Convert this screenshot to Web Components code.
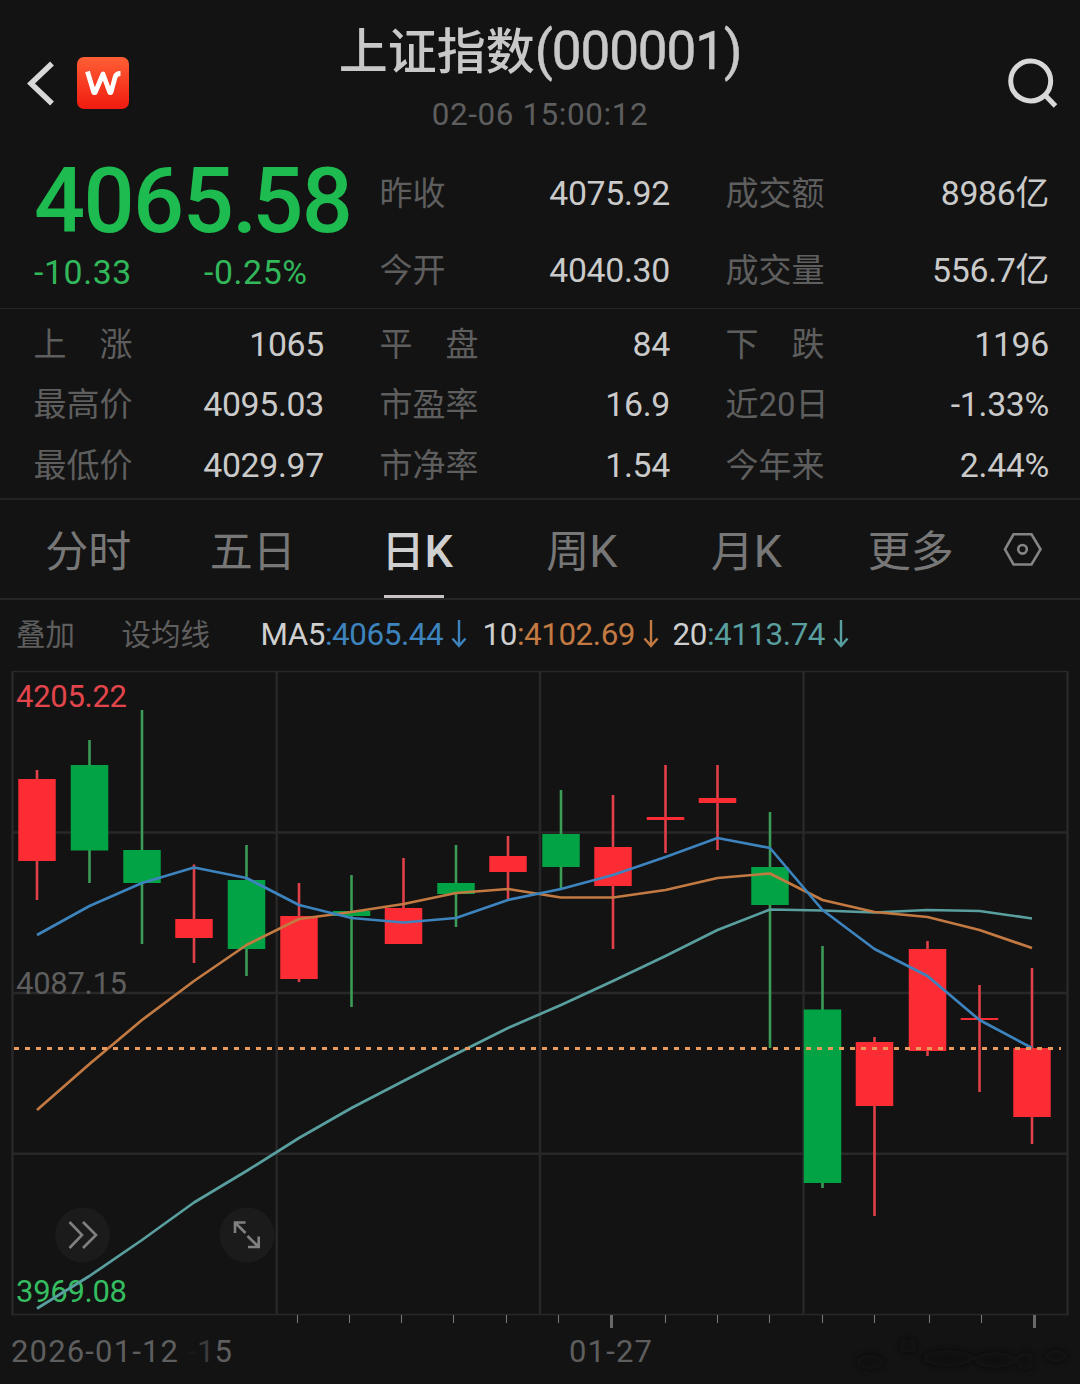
<!DOCTYPE html>
<html lang="zh-CN">
<head>
  <meta charset="utf-8">
  <title>上证指数</title>
  <style>
    html, body { margin: 0; background: #131313; }
    body { width: 1080px; height: 1384px; overflow: hidden; color: #cacaca;
      font-family: "Noto Sans CJK SC", sans-serif; font-size: 33px; }
  </style>
</head>
<body>
  <index-page></index-page>

  <script>
    // small helper: every element below gets its shadow root from a string
    // .num is for latin text and digits, it does not change the line box around it
    const numStyle = '.num { font-family: Roboto, "Noto Sans CJK SC", sans-serif; line-height: 0; }';
    const define = (name, render) => {
      customElements.define(name, class extends HTMLElement {
        connectedCallback() {
          if (this.shadowRoot) return;
          this.attachShadow({mode: 'open'}).innerHTML = `<style>${numStyle}</style>` + render(this);
        }
      });
    };

    define('nav-header', () => `<style>
    :host { display: flex; height: 150px; justify-content: space-between; align-items: flex-start; }
    .side { width: 200px; padding-top: 45px; height: 75px; }
    svg { display: block; }
    .right svg { margin-left: auto; }
    .middle { text-align: center; white-space: nowrap; }
    .title { font-size: 49px; line-height: 60px; height: 60px; padding-top: 18px; font-weight: 500; color: #c8c8c8; }
    .title .num { font-size: 53px; letter-spacing: -1.100px; font-weight: 400; -webkit-text-stroke: .5px; }
    .time { font-size: 30.500px; line-height: 40px; margin-top: 14px; color: #5e5e5e; }
    .time .num { font-size: 31.400px; letter-spacing: .6px; }
    </style>
    <div class="side">
      <svg width="140" height="75" viewBox="0 45 140 75" fill="none">
        <defs><linearGradient id="g" x1="0" y1="0" x2="0" y2="1"><stop offset="0" stop-color="#ff5f35"/><stop offset="1" stop-color="#f01a10"/></linearGradient></defs>
        <path d="M52 63.500 31 83.500 52 103.500" stroke="#d8d8d8" stroke-width="5.500"/>
        <rect x="77" y="57" width="52" height="52" rx="7" fill="url(#g)"/>
        <path d="M87.500 71.500 93.800 92.500H95.200L103 74 109.800 92.500H111L115 77.500Q116 73.500 120.500 73.500" stroke="#fff" stroke-width="4.800" stroke-linejoin="round"/>
      </svg>
    </div>
    <div class="middle">
      <div class="title"><slot name="title"></slot><span class="num"><slot name="code"></slot></span></div>
      <div class="time"><span class="num"><slot name="time"></slot></span></div>
    </div>
    <div class="side right">
      <svg width="80" height="75" viewBox="1000 45 80 75" fill="none" stroke="#d8d8d8" stroke-width="5">
        <circle cx="1030.700" cy="81" r="20"/><path d="M1044.500 94.500 1055.500 106"/>
      </svg>
    </div>`);

    define('quote-item', el => `<style>
    :host { display: flex; justify-content: space-between; line-height: 48px; height: 48px; white-space: pre; }
    .label { color: #5e5e5e; margin-left: -.5px; }
    .value .num { font-size: 33.800px; letter-spacing: -.3px; }
    </style>
    <span class="label">${el.getAttribute('label').replace(/\d+/g, '<span class="num">$&</span>')}</span><span class="value"><span class="num"><slot></slot></span></span>`);

    define('price-panel', () => `<style>
    :host { display: grid; grid-template-columns: 290px 290px 323px; column-gap: 56px;
      padding-left: 34px; height: 158px; border-bottom: 1px solid #262626; }
    .price { font-family: Roboto, sans-serif; font-size: 90px; line-height: 104px; height: 104px; font-weight: 500;
      color: #1dbb50; letter-spacing: -1.600px; white-space: nowrap; }
    .change { display: flex; line-height: 48px; color: #32b85a; margin-top: -6px; }
    .change ::slotted(span) { flex: none; width: 170px; font-family: Roboto, sans-serif; font-size: 33.800px; line-height: 50px; letter-spacing: .6px; }
    .col { padding-top: 17px; display: flex; flex-direction: column; gap: 29px; }
    </style>
    <div><div class="price"><slot name="price"></slot></div><div class="change"><slot name="change"></slot></div></div>
    <div class="col"><slot name="open"></slot></div>
    <div class="col"><slot name="volume"></slot></div>`);

    define('stat-grid', () => `<style>
    :host { display: grid; grid-template-columns: 290px 290px 323px; grid-auto-rows: 48px; gap: 12.300px 56px;
      padding: 9px 0 0 34px; height: 180px; border-bottom: 2px solid #232323; }
    </style><slot></slot>`);

    define('tab-item', el => `<style>
    :host { width: 164.500px; text-align: center; font-size: 43px; line-height: 97px; height: 98px; color: #777; position: relative; }
    :host([active]) { color: #d0d0d0; font-weight: 500; }
    :host([active])::after { content: ""; position: absolute; left: 49px; bottom: 0; width: 60px; height: 3px; background: #c8c4c4; }
    .num { font-size: 45px; }
    </style><slot></slot><span class="num"><slot name="k"></slot></span>`);

    define('tab-bar', () => `<style>
    :host { display: flex; height: 98px; padding-left: 6px; border-bottom: 2px solid #262626; }
    svg { margin: 29px 0 0 7px; }
    </style><slot></slot>
    <svg width="44" height="40" viewBox="1000 529 44 40" fill="none" stroke="#858585" stroke-width="2.600">
      <path d="M1005 549.300 1013.500 534.300H1031.500L1040.500 549.300 1031.500 564.500H1013.500Z"/><circle cx="1022.500" cy="549.300" r="4.300"/>
    </svg>`);

    define('ma-value', el => `<style>
    :host { display: flex; color: ${el.getAttribute('color')}; font-family: Roboto, sans-serif; font-size: 31.400px; letter-spacing: -.450px; }
    b { font-weight: 400; color: #cfcfcf; }
    svg { margin: 19px 0 0 8px; }
    </style>
    <b>${el.getAttribute('label')}</b>:<slot></slot>
    <svg width="16" height="30" viewBox="0 0 16 30" fill="none" stroke="currentColor" stroke-width="2.400"><path d="M8 1V27M1.500 19.500 8 27 14.500 19.500"/></svg>`);

    define('ma-bar', () => `<style>
    :host { display: flex; height: 68px; line-height: 65px; padding-left: 16px; white-space: nowrap; }
    .tool { font-size: 29.500px; color: #5e5e5e; width: 105.500px; }
    .tool.lines { width: 139px; }
    .values { display: grid; grid-template-columns: 222px 190px auto; line-height: 69px; }
    </style>
    <span class="tool">叠加</span><span class="tool lines">设均线</span><div class="values"><slot></slot></div>`);

    // center x, high, low, body top, body bottom, direction
    const candles = [
      [37, 770, 900, 779, 861, 'r'], [89.5, 740, 883, 765, 850.5, 'g'], [142, 710, 944, 850, 883, 'g'],
      [194, 864.5, 963, 919, 938, 'r'], [246.5, 845, 976, 880, 949, 'g'], [299, 883, 982, 916, 979, 'r'],
      [351.5, 875, 1007, 911, 916, 'g'], [403.5, 858, 944, 908, 944, 'r'], [456, 845, 927, 883, 894, 'g'],
      [508, 836, 900, 856, 872, 'r'], [561, 790, 889, 834, 867, 'g'], [613, 795, 949, 847, 886, 'r'],
      [665.5, 765, 853, 817, 820, 'r'], [717.5, 765, 850, 798, 803, 'r'], [770, 812, 1048, 867, 905, 'g'],
      [822.5, 946, 1188, 1009.5, 1183, 'g'], [874.5, 1037, 1216, 1042, 1106, 'r'], [927.5, 941, 1056, 949, 1051, 'r'],
      [979.5, 985, 1092, 1018, 1020, 'r'], [1032, 968, 1144, 1048, 1117, 'r']
    ];
    const ma5 = [935, 906, 883, 867.5, 878, 905, 918, 922.5, 918, 900, 889, 875, 857, 838, 848, 910, 949, 976, 1020, 1048];
    const ma10 = [1110, 1064, 1020, 981, 945, 919, 912, 904, 893, 889, 897.5, 897.5, 890, 878, 873.5, 900, 912, 917, 930, 948];
    const ma20 = [1308.5, 1276, 1240, 1202.5, 1171, 1138, 1108, 1081, 1054, 1028, 1005, 981, 956, 930, 909.5, 910.5, 912.5, 910, 911, 918.5];
    const colors = {r: ['#fb2c34', '#e04048'], g: ['#02a344', '#3a9c56']};
    const line = (ys, color) => `<polyline points="${ys.map((y, i) => `${candles[i][0]},${y}`).join(' ')}" stroke="${color}" stroke-width="2.700" fill="none" stroke-linejoin="round"/>`;

    define('k-chart', () => {
      const bars = candles.map(([x, hi, lo, top, bottom, dir]) => `
        <path d="M${x} ${hi}V${lo}" stroke="${colors[dir][1]}" stroke-width="2.600"/>
        <rect x="${x - 18.75}" y="${top}" width="37.500" height="${bottom - top}" fill="${colors[dir][0]}"/>`).join('');
      const ticks = [297.5, 349.5, 401.5, 453.5, 506.5, 558.5, 665.5, 717.5, 769.5, 822.5, 874.5, 929.5, 981.5];
      return `<style>
    :host { display: block; height: 716px; }
    svg { display: block; }
    text { font-family: Roboto, sans-serif; font-size: 31px; }
    </style>
    <svg width="1080" height="716" viewBox="0 668 1080 716">
      <defs><filter id="soft" filterUnits="userSpaceOnUse" x="820" y="1316" width="260" height="68"><feGaussianBlur stdDeviation="3"/></filter></defs>
      <g stroke="#282828" stroke-width="2.500" fill="none">
        <path d="M276.700 672V1314M540 672V1314M803.500 672V1314M13 832.500H1067M13 993H1067M13 1153.700H1067"/>
        <path d="M12.500 671V1315M1067.500 671V1315"/><path d="M12 671.500H1068M12 1314.500H1068" stroke-width="1.300"/>
      </g>
      ${bars}
      <text x="16" y="707" textLength="111" fill="#e2454b">4205.22</text>
      <text x="16" y="994" textLength="111" fill="#5e5e5e">4087.15</text>
      <text x="16" y="1302" textLength="111" fill="#35bd60">3969.08</text>
      ${line(ma20, '#5a9f9f')}${line(ma10, '#c37a42')}${line(ma5, '#3d83bd')}
      <path d="M14 1048.500H1061" stroke="#e99a5c" stroke-width="3" stroke-dasharray="5 6"/>
      <circle cx="82.500" cy="1235" r="27.500" fill="#1b1b1b"/><circle cx="247" cy="1235" r="27.500" fill="#1b1b1b"/>
      <g fill="none" stroke="#808080" stroke-width="2.600">
        <path d="M69.500 1222 82 1235 69.500 1248M83 1222 96 1235 83 1248"/>
        <path d="M245.500 1222.500H235V1233M236 1223.500 245.500 1233M248 1247H258.700V1236.500M257.700 1246 247.500 1236"/>
      </g>
      <path d="${ticks.map(x => `M${x} 1315V1323`).join('')}" stroke="#757575" stroke-width="1.100"/>
      <path d="M611.500 1315V1328M1034.500 1315V1328" stroke="#686868" stroke-width="3"/>
      <g fill="#5e5e5e">
        <text x="11" y="1362" textLength="167">2026-01-12</text>
        <text x="187" y="1362" fill="#191919">-</text>
        <text x="197" y="1362" fill="#3a3a3a">1</text><text x="214.500" y="1362">5</text>
        <text x="569" y="1362" textLength="83">01-27</text>
      </g>
      <g fill="#0a0a0a" filter="url(#soft)" opacity=".6">
        <ellipse cx="870" cy="1362" rx="14" ry="7"/><ellipse cx="908" cy="1346" rx="9" ry="7"/><ellipse cx="948" cy="1358" rx="26" ry="8"/>
        <ellipse cx="995" cy="1360" rx="20" ry="8"/><ellipse cx="1025" cy="1361" rx="9" ry="9"/><ellipse cx="1056" cy="1356" rx="11" ry="6"/>
      </g>
    </svg>`;
    });

    define('index-page', () => `<style>
    :host { display: block; }
    /* the decimal point of the big price sits tight between its digits */
    i { font-style: normal; letter-spacing: -5px; }
    </style>
    <nav-header><span slot="title">上证指数</span><span slot="code">(000001)</span><span slot="time">02-06 15:00:12</span></nav-header>
    <price-panel>
      <span slot="price">4065<i>.</i>58</span>
      <span slot="change">-10.33</span><span slot="change">-0.25%</span>
      <quote-item slot="open" label="昨收">4075.92</quote-item>
      <quote-item slot="open" label="今开">4040.30</quote-item>
      <quote-item slot="volume" label="成交额">8986亿</quote-item>
      <quote-item slot="volume" label="成交量">556.7亿</quote-item>
    </price-panel>
    <stat-grid>
      <quote-item label="上&#12288;涨">1065</quote-item><quote-item label="平&#12288;盘">84</quote-item><quote-item label="下&#12288;跌">1196</quote-item>
      <quote-item label="最高价">4095.03</quote-item><quote-item label="市盈率">16.9</quote-item><quote-item label="近20日">-1.33%</quote-item>
      <quote-item label="最低价">4029.97</quote-item><quote-item label="市净率">1.54</quote-item><quote-item label="今年来">2.44%</quote-item>
    </stat-grid>
    <tab-bar>
      <tab-item>分时</tab-item><tab-item>五日</tab-item><tab-item active>日<span slot="k">K</span></tab-item>
      <tab-item>周<span slot="k">K</span></tab-item><tab-item>月<span slot="k">K</span></tab-item><tab-item>更多</tab-item>
    </tab-bar>
    <ma-bar>
      <ma-value label="MA5" color="#3d83bd">4065.44</ma-value>
      <ma-value label="10" color="#c37a42">4102.69</ma-value>
      <ma-value label="20" color="#5a9f9f">4113.74</ma-value>
    </ma-bar>
    <k-chart></k-chart>`);
  </script>
</body>
</html>
